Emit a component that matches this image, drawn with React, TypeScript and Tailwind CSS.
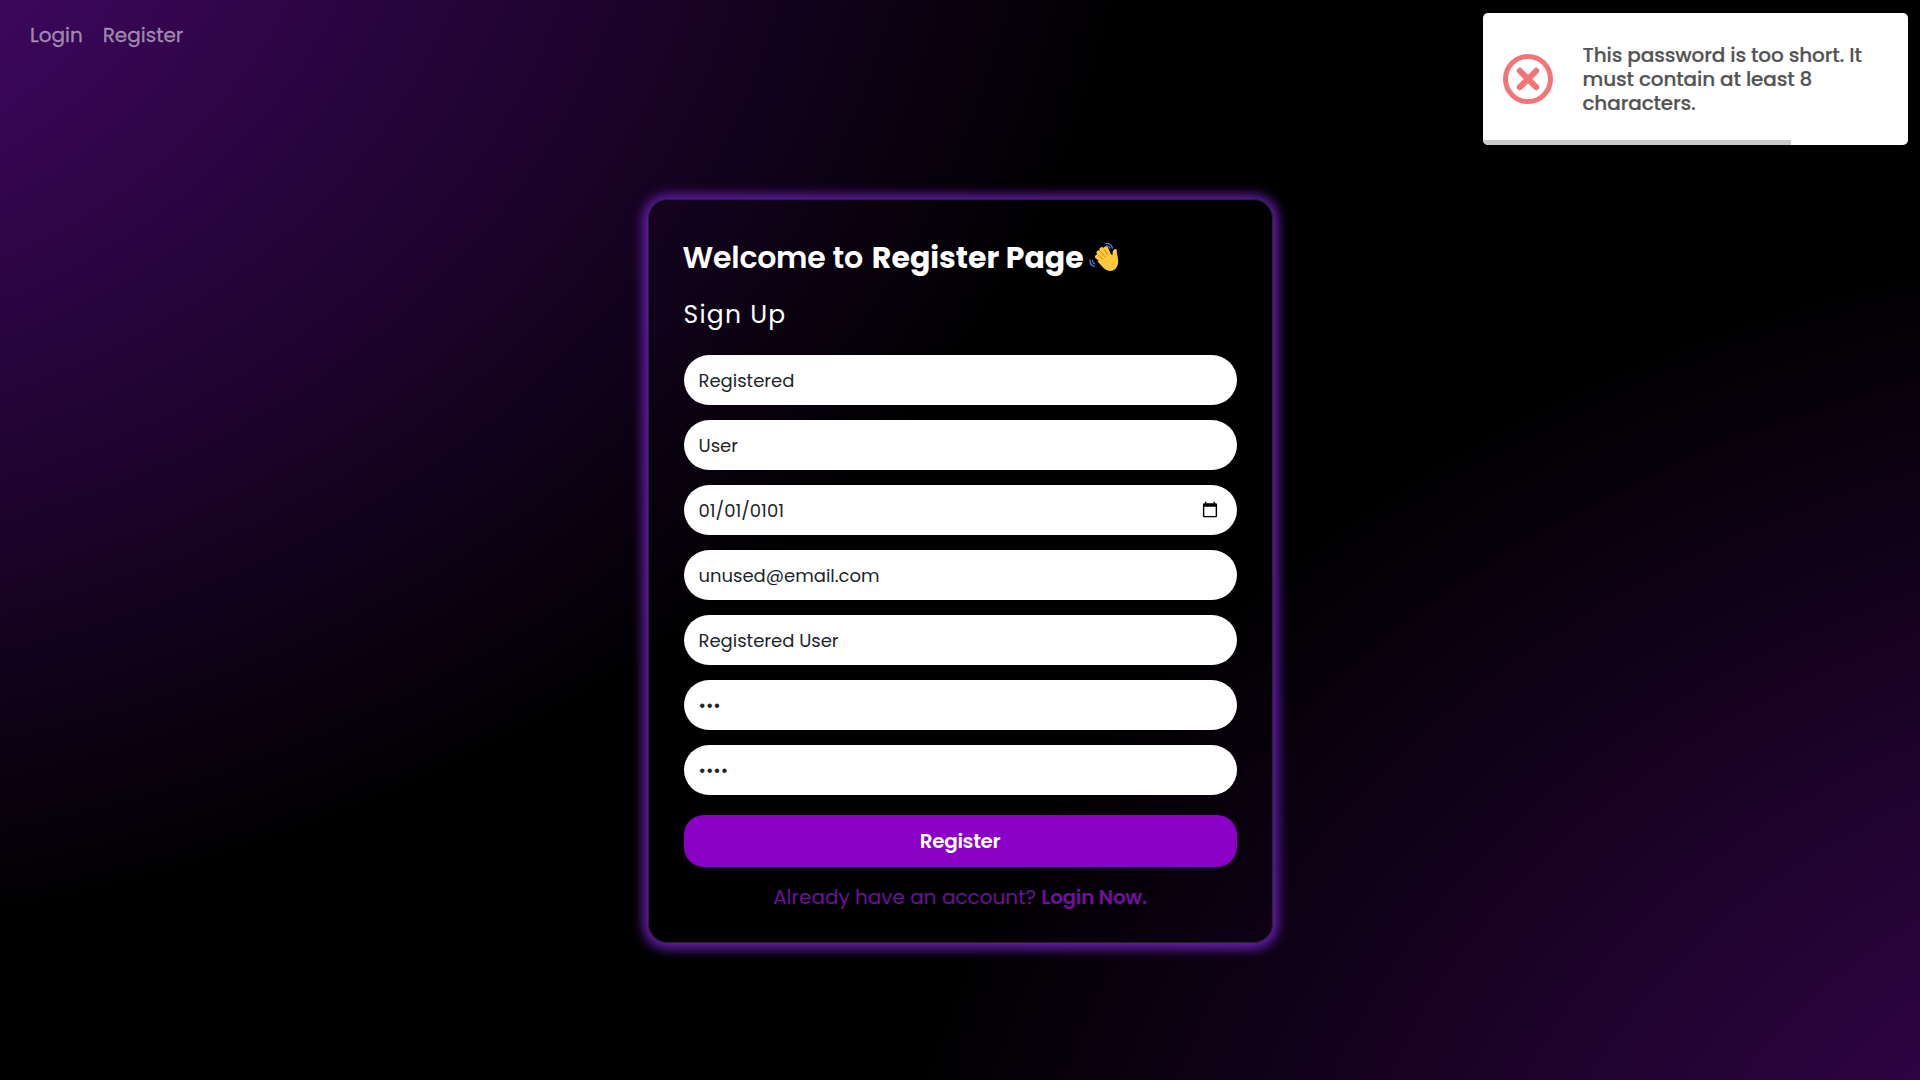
const fields = [
  { type: "text", value: "Registered" },
  { type: "text", value: "User" },
  { type: "date", value: "0101-01-01" },
  { type: "text", value: "unused@email.com" },
  { type: "text", value: "Registered User" },
  { type: "password", value: "123" },
  { type: "password", value: "1234" },
];

function WavingHand() {
  return (
    <svg viewBox="0 0 30 30" className="h-[30px] w-[30px]" fill="none" strokeLinecap="round" strokeLinejoin="round">
      <g stroke="#ffc83d" strokeWidth="4.6">
        <path d="M14.6 15.6 9.8 10.6" />
        <path d="M16.6 13.6 12.8 7.4" />
        <path d="M19.6 12.6 17 6.6" />
        <path d="M13.4 18.8 8.4 14.8" />
      </g>
      <path d="M11 17 18 10l5.600 3.200c-.2-2 0-3.800 1-5.200 1.200-1.600 3.400-1 3.300.8-.3 3.400 1.300 6.400 1.300 10.400 0 5.600-3.400 9.800-8 9.800-3.600 0-6.200-2.400-8.400-5L8.600 19.400z" fill="#ffc83d" />
      <g stroke="#d67d00" strokeWidth=".9">
        <path d="M9.600 13.400l4 3.800" />
        <path d="M11.800 9.800l4.300 5" />
        <path d="M15.400 7.600l3.200 5.200" />
      </g>
      <g stroke="#4a7fe6" strokeWidth="1.300">
        <path d="M17.200 1.400c3-.2 5.400 1.600 6.200 4.600" />
        <path d="M17.600 3.800c1.600 0 2.800.8 3.400 2.400" />
        <path d="M1 18c-.2 3.200 1.500 5.600 4.400 6.500" />
        <path d="M3.500 18.400c0 1.700.8 2.900 2.300 3.600" />
      </g>
    </svg>
  );
}

function ErrorIcon() {
  return (
    <svg viewBox="0 0 50 50" className="h-[50px] w-[50px] shrink-0" fill="none" stroke="#f27474" strokeWidth="5" strokeLinecap="round">
      <circle cx="25" cy="25" r="22.500" />
      <path d="M16.800 16.800 33.200 33.200M33.200 16.800 16.800 33.200" strokeWidth="6" />
    </svg>
  );
}

export default function App() {
  return (
    <div className="relative h-[1080px] w-full overflow-hidden bg-black bg-[radial-gradient(1475px_1127px_at_-330px_-178px,#53097f_0%,#000_100%),radial-gradient(1460px_1115px_at_2330px_1330px,#480668_0%,#000_100%)] bg-blend-screen font-['Poppins','Inter',sans-serif]">
      <nav className="flex gap-5 pl-[30px] pt-5 text-[20px] leading-[30px] text-white/50 [-webkit-text-stroke:0.3px_rgba(255,255,255,0.4)]">
        <a>Login</a>
        <a>Register</a>
      </nav>
      <main className="mx-auto mt-[149px] h-[744px] w-[625px] rounded-[20px] border border-[#22252c] px-[35px] pt-[35px] shadow-[0_1px_12px_5px_#6a1eb4]">
        <h1 className="flex items-center text-[30px] leading-[45px] text-white">
          <span className="-ml-px font-semibold tracking-[-0.23px]">Welcome to</span>
          <b className="ml-[9px] font-bold">Register Page</b>
          <span className="-mt-0.5 pl-[5px]">
            <WavingHand />
          </span>
        </h1>
        <h2 className="mt-4 text-[25px] leading-[38px] tracking-[1.25px] text-white">Sign Up</h2>
        <form className="mt-[21px] flex flex-col gap-[15px]">
          {fields.map((f, i) => (
            <input
              key={i}
              type={f.type}
              defaultValue={f.value}
              className="h-[50px] w-full rounded-[25px] bg-white px-[15px] text-[18px] text-[#212529] [&::-webkit-calendar-picker-indicator]:mr-px [&::-webkit-datetime-edit-day-field]:p-0 [&::-webkit-datetime-edit-month-field]:p-0 [&::-webkit-datetime-edit-year-field]:p-0"
            />
          ))}
          <button type="button" className="mt-[5px] h-[52px] rounded-[20px] bg-[#8a00c4] text-[20px] font-semibold tracking-[-0.35px] text-white">
            Register
          </button>
        </form>
        <p className="mt-[15px] text-center text-[20px] text-[#6c1299]">
          Already have an account? <span className="font-semibold tracking-[-0.3px]">Login Now.</span>
        </p>
      </main>
      <aside className="absolute right-3 top-[13px] flex h-[132px] w-[425px] items-center overflow-hidden rounded-[5px] bg-white pl-5">
        <ErrorIcon />
        <p className="ml-[29.500px] w-[290px] text-[20px] font-medium leading-6 tracking-[-0.13px] text-[#545454] [-webkit-text-stroke:0.2px_#545454]">
          This password is too short. It must contain at least 8 characters.
        </p>
        <div className="absolute bottom-0 left-0 h-[5px] w-[308px] bg-[#cacaca]" />
      </aside>
    </div>
  );
}
